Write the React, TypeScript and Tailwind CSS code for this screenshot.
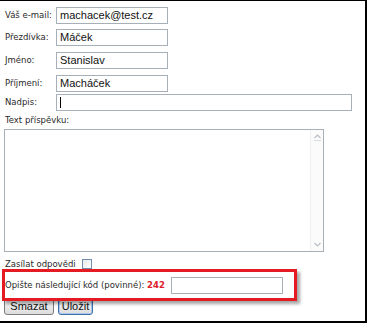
import type { FC } from "react";

const label = "text-[8.5px] text-[#2a2a2a] font-['DejaVu_Sans',Verdana,sans-serif]";
const field =
  "h-[17px] border border-[#a7afb8] bg-white px-[3px] text-[11px] leading-[15px] text-[#111] font-['Liberation_Sans',Arial,sans-serif]";

const Row: FC<{ name: string; value?: string; wide?: boolean; caret?: boolean; className?: string }> = ({
  name,
  value,
  wide,
  caret,
  className = "",
}) => (
  <div className={`flex items-center ${className}`}>
    <span className={`${label} w-[52px] shrink-0 pl-[1px]`}>{name}</span>
    <div className={`${field} ${wide ? "w-[296px]" : "w-[112px]"} flex items-center`}>
      {caret && <span className="h-[11px] w-px bg-black" />}
      {value}
    </div>
  </div>
);

export default function App() {
  return (
    <div className="relative h-[323px] w-[367px] overflow-hidden border-t border-r-2 border-b-2 border-black bg-white">
      <div className="flex flex-col pl-[4px] pt-[6px]">
        <Row name="Váš e-mail:" value="machacek@test.cz" />
        <Row name="Přezdívka:" value="Máček" className="mt-[5px]" />
        <Row name="Jméno:" value="Stanislav" className="mt-[6px]" />
        <Row name="Příjmení:" value="Macháček" className="mt-[6px]" />
        <Row name="Nadpis:" wide caret className="mt-[2px]" />

        <span className={`${label} mt-[2px] pl-[1px] leading-[14px]`}>Text příspěvku:</span>
        <div className="mt-[2px] flex h-[123px] w-[320px] border border-[#a7afb8] bg-white">
          <div className="flex-1" />
          <div className="flex w-[13px] flex-col items-center justify-between border-l border-[#eef0f2] bg-[#fbfbfb] py-[2px]">
            <svg width="9" height="9" viewBox="0 0 9 9">
              <path d="M1.5 6 L4.5 3 L7.5 6" fill="none" stroke="#b9bec5" strokeWidth="1.2" />
              <path d="M1 8.5 H8" stroke="#d7dbe0" />
            </svg>
            <svg width="9" height="9" viewBox="0 0 9 9">
              <path d="M1.5 3 L4.5 6 L7.5 3" fill="none" stroke="#b9bec5" strokeWidth="1.2" />
            </svg>
          </div>
        </div>

        <div className="mt-[6px] flex items-center gap-[6px] pl-[1px]">
          <span className={label}>Zasílat odpovědi</span>
          <span className="h-[10px] w-[10px] border border-[#6f8fb0] bg-gradient-to-br from-[#e6e8ec] to-white" />
        </div>

        <div className="mt-[6px] flex items-center gap-[6px] pl-[1px]">
          <span className={label}>
            Opište následující kód (povinné): <b className="font-bold text-[#e0202a]">242</b>
          </span>
          <div className="h-[17px] w-[112px] border border-[#a7afb8] bg-white" />
        </div>

        <div className="mt-[4px] flex gap-[4px]">
          <button className="h-[17px] w-[50px] rounded-[3px] border border-[#7d7d7d] bg-gradient-to-b from-[#fafafa] to-[#dcdcdc] text-[11px] leading-[15px] text-[#111] font-['Liberation_Sans',Arial,sans-serif]">
            Smazat
          </button>
          <button className="h-[17px] w-[35px] rounded-[3px] border border-[#3d6fa8] bg-gradient-to-b from-[#fafafa] to-[#dcdcdc] text-[11px] leading-[15px] text-[#111] font-['Liberation_Sans',Arial,sans-serif] shadow-[inset_0_0_0_1px_#a9c9ec]">
            Uložit
          </button>
        </div>
      </div>

      {/* red highlight box drawn over the captcha row */}
      <div className="pointer-events-none absolute left-[2px] top-[268px] h-[32px] w-[295px] border-[3px] border-[#e51b23] shadow-[3px_3px_3px_rgba(0,0,0,0.35)]" />
    </div>
  );
}
